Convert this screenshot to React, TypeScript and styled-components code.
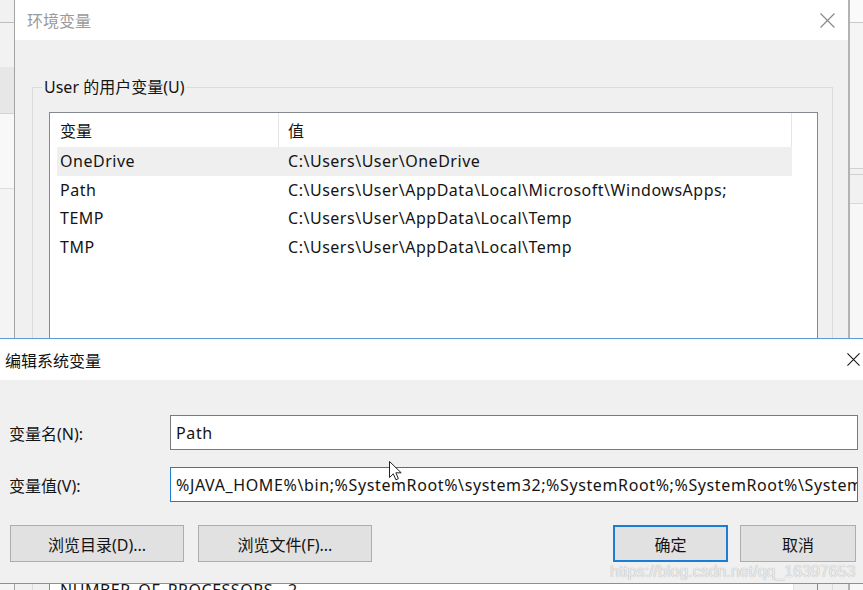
import React from 'react';
import styled, { createGlobalStyle } from 'styled-components';

const UI_FONT = `"Noto Sans", "Noto Sans CJK SC", sans-serif`;

const userVars = [
  { name: 'OneDrive', value: 'C:\\Users\\User\\OneDrive' },
  { name: 'Path', value: 'C:\\Users\\User\\AppData\\Local\\Microsoft\\WindowsApps;' },
  { name: 'TEMP', value: 'C:\\Users\\User\\AppData\\Local\\Temp' },
  { name: 'TMP', value: 'C:\\Users\\User\\AppData\\Local\\Temp' },
];

const systemVars = [
  { name: 'ComSpec', value: 'C:\\Windows\\system32\\cmd.exe' },
  { name: 'DriverData', value: 'C:\\Windows\\System32\\Drivers\\DriverData' },
  { name: 'JAVA_HOME', value: 'C:\\Program Files\\Java\\jdk1.8.0_201' },
  { name: 'NUMBER_OF_PROCESSORS', value: '2' },
  { name: 'OS', value: 'Windows_NT' },
];

const PATH_VALUE =
  '%JAVA_HOME%\\bin;%SystemRoot%\\system32;%SystemRoot%;%SystemRoot%\\System32\\Wbem;%SYSTEMROOT%\\System32\\WindowsPowerShell\\v1.0\\';

function CloseIcon({ color, size }: { color: string; size: number }) {
  return (
    <svg width={size} height={size} viewBox="0 0 14 14">
      <path d="M0.5 0.5 L13.5 13.5 M13.5 0.5 L0.5 13.5" stroke={color} strokeWidth="1.1" fill="none" />
    </svg>
  );
}

function PointerIcon() {
  return (
    <svg width="14" height="21" viewBox="0 0 14 21">
      <path
        d="M0.5 0.5 L0.5 16.5 L4.3 12.8 L6.9 18.8 L9.4 17.7 L6.9 11.8 L12.2 11.8 Z"
        fill="#fff"
        stroke="#222"
        strokeWidth="1"
        strokeLinejoin="round"
      />
    </svg>
  );
}

function VarList({ rows, height, selected, scroll }: {
  rows: { name: string; value: string }[];
  height: number;
  selected?: number;
  scroll?: boolean;
}) {
  return (
    <ListBox $h={height}>
      <ListMain>
        <HeaderRow>
          <HeaderCell $w={229} $pad={10}>变量</HeaderCell>
          <HeaderCell $w={513} $pad={9}>值</HeaderCell>
        </HeaderRow>
        {rows.map((r, i) => (
          <Row key={r.name} $selected={i === selected}>
            <Cell $w={222} $pad={3}>{r.name}</Cell>
            <Cell $pad={9}>{r.value}</Cell>
          </Row>
        ))}
      </ListMain>
      {scroll && <ScrollTrack />}
    </ListBox>
  );
}

export default function App() {
  return (
    <>
      <GlobalStyle />
      <Desktop>
        <SideWindow $side="left">
          <Band $h={23} $bg="#f1f1f1" $line="#bdbdbd" />
          <Band $h={44} $bg="#f2f2f2" />
          <Band $h={47} $bg="#e7e7e7" $line="#d3d3d3" />
          <Band $h={75} $bg="#f8f8f8" $line="#dedede" />
          <Band $h={400} $bg="#f4f4f4" />
        </SideWindow>
        <SideWindow $side="right">
          <Band $h={23} $bg="#fafafa" $line="#c9c9c9" />
          <Band $h={146} $bg="#f5f5f5" $line="#d2d2d2" />
          <Band $h={6} $bg="#f1f1f1" $line="#d2d2d2" />
          <Band $h={29} $bg="#f1f1f1" $line="#d8d8d8" />
          <Band $h={400} $bg="#f7f7f7" />
        </SideWindow>

        <EnvWindow>
          <TitleBar $h={40} $padL={12} $padR={13} $inactive>
            <span>环境变量</span>
            <CloseIcon color="#8a8a8a" size={15} />
          </TitleBar>
          <EnvBody>
            <GroupBox>
              <Legend>User 的用户变量(U)</Legend>
              <VarList rows={userVars} height={230} selected={0} />
              <ButtonBar $end>
                <DlgButton $w={115} $h={33}>新建(N)...</DlgButton>
                <DlgButton $w={115} $h={33}>编辑(E)...</DlgButton>
                <DlgButton $w={115} $h={33}>删除(D)</DlgButton>
              </ButtonBar>
            </GroupBox>
            <GroupBox $gap={21}>
              <Legend>系统变量(S)</Legend>
              <VarList rows={systemVars} height={200} scroll />
            </GroupBox>
          </EnvBody>
        </EnvWindow>

        <EditWindow>
          <TitleBar $h={41} $padL={8} $padR={15}>
            <span>编辑系统变量</span>
            <CloseIcon color="#111" size={13} />
          </TitleBar>
          <EditBody>
            <FormGrid>
              <FieldLabel>变量名(N):</FieldLabel>
              <TextBox>
                <TextValue>Path</TextValue>
              </TextBox>
              <FieldLabel>变量值(V):</FieldLabel>
              <TextBox $focused>
                <TextValue>{PATH_VALUE}</TextValue>
              </TextBox>
            </FormGrid>
            <ButtonBar>
              <ButtonGroup $gap={14}>
                <DlgButton $w={174} $h={37}>浏览目录(D)...</DlgButton>
                <DlgButton $w={174} $h={37}>浏览文件(F)...</DlgButton>
              </ButtonGroup>
              <ButtonGroup $gap={12}>
                <DlgButton $w={115} $h={37} $primary>确定</DlgButton>
                <DlgButton $w={116} $h={37}>取消</DlgButton>
              </ButtonGroup>
            </ButtonBar>
          </EditBody>
        </EditWindow>

        <Pointer>
          <PointerIcon />
        </Pointer>
        <Watermark>https://blog.csdn.net/qq_16397653</Watermark>
      </Desktop>
    </>
  );
}

const GlobalStyle = createGlobalStyle`
  html, body {
    margin: 0;
    padding: 0;
    background: #f0f0f0;
    overflow: hidden;
  }
  * {
    box-sizing: border-box;
  }
`;

const Desktop = styled.div`
  position: relative;
  width: 863px;
  height: 590px;
  overflow: hidden;
  background: #f0f0f0;
  font-family: ${UI_FONT};
  font-size: 16px;
  color: #141414;
`;

const SideWindow = styled.div<{ $side: 'left' | 'right' }>`
  position: absolute;
  top: 0;
  bottom: 0;
  ${p => (p.$side === 'left' ? 'left: 0; width: 15px;' : 'right: 0; width: 14px;')}
  display: flex;
  flex-direction: column;
  background: #f3f3f3;
`;

const Band = styled.div<{ $h: number; $bg: string; $line?: string }>`
  flex: none;
  height: ${p => p.$h}px;
  background: ${p => p.$bg};
  border-bottom: 1px solid ${p => p.$line ?? p.$bg};
`;

const EnvWindow = styled.section`
  position: absolute;
  left: 14px;
  top: 0;
  width: 836px;
  height: 640px;
  display: flex;
  flex-direction: column;
  background: #f0f0f0;
  border-left: 1px solid #a3a3a3;
  border-right: 2px solid #b3b3b3;
`;

const TitleBar = styled.header<{ $h: number; $padL: number; $padR: number; $inactive?: boolean }>`
  flex: none;
  height: ${p => p.$h}px;
  display: flex;
  align-items: center;
  justify-content: space-between;
  padding: 0 ${p => p.$padR}px 0 ${p => p.$padL}px;
  background: #fff;
  color: ${p => (p.$inactive ? '#9a9a9a' : '#111')};
  font-size: 16px;
  svg {
    display: block;
  }
`;

const EnvBody = styled.div`
  flex: 1;
  display: flex;
  flex-direction: column;
  padding: 36px 15px 0 17px;
`;

const GroupBox = styled.fieldset<{ $gap?: number }>`
  margin: ${p => p.$gap ?? 0}px 0 0;
  padding: 14px 14px 12px 16px;
  border: 1px solid #dcdcdc;
  min-width: 0;
`;

const Legend = styled.legend`
  margin-left: -7px;
  padding: 0 2px;
  line-height: 22px;
  font-size: 16px;
  color: #141414;
`;

const ListBox = styled.div<{ $h: number }>`
  height: ${p => p.$h}px;
  display: flex;
  border: 1px solid #84888f;
  background: #fff;
  overflow: hidden;
`;

const ListMain = styled.div`
  flex: 1;
  min-width: 0;
  display: flex;
  flex-direction: column;
`;

const HeaderRow = styled.div`
  flex: none;
  display: flex;
  height: 34px;
`;

const HeaderCell = styled.div<{ $w: number; $pad: number }>`
  flex: none;
  width: ${p => p.$w}px;
  padding-left: ${p => p.$pad}px;
  display: flex;
  align-items: center;
  border-right: 1px solid #e5e5e5;
`;

const Row = styled.div<{ $selected?: boolean }>`
  flex: none;
  display: flex;
  align-items: center;
  height: 28.5px;
  width: 735px;
  margin-left: 7px;
  background: ${p => (p.$selected ? '#efefef' : 'transparent')};
  white-space: nowrap;
  letter-spacing: 0.52px;
`;

const Cell = styled.div<{ $w?: number; $pad: number }>`
  flex: ${p => (p.$w ? 'none' : '1')};
  width: ${p => (p.$w ? `${p.$w}px` : 'auto')};
  padding-left: ${p => p.$pad}px;
  overflow: hidden;
`;

const ScrollTrack = styled.div`
  flex: none;
  width: 24px;
  background: #f0f0f0;
  border-left: 1px solid #e2e2e2;
`;

const ButtonBar = styled.div<{ $end?: boolean }>`
  display: flex;
  justify-content: ${p => (p.$end ? 'flex-end' : 'space-between')};
  gap: 10px;
  margin-top: ${p => (p.$end ? 10 : 23)}px;
  padding: ${p => (p.$end ? '0' : '0 2px 0 1px')};
`;

const ButtonGroup = styled.div<{ $gap: number }>`
  display: flex;
  gap: ${p => p.$gap}px;
`;

const DlgButton = styled.button<{ $w: number; $h: number; $primary?: boolean }>`
  width: ${p => p.$w}px;
  height: ${p => p.$h}px;
  margin: 0;
  padding: 0;
  background: #e1e1e1;
  border: ${p => (p.$primary ? '2px solid #1a7fd4' : '1px solid #adadad')};
  border-radius: 0;
  font-family: ${UI_FONT};
  font-size: 16px;
  color: #141414;
`;

const EditWindow = styled.section`
  position: absolute;
  left: -4px;
  top: 338px;
  width: 880px;
  height: 246px;
  display: flex;
  flex-direction: column;
  background: #f0f0f0;
  border: 1px solid #5a9bd8;
`;

const EditBody = styled.div`
  flex: 1;
  display: flex;
  flex-direction: column;
  padding: 35px 17px 0 12px;
`;

const FormGrid = styled.div`
  display: grid;
  grid-template-columns: 161px 1fr;
  row-gap: 17px;
  align-items: center;
`;

const FieldLabel = styled.label`
  font-size: 16px;
`;

const TextBox = styled.div<{ $focused?: boolean }>`
  height: 35px;
  display: flex;
  align-items: center;
  padding: 0 5px;
  background: #fff;
  border: 1px solid ${p => (p.$focused ? '#1a7fd4' : '#7a7a7a')};
  overflow: hidden;
`;

const TextValue = styled.span`
  white-space: nowrap;
  letter-spacing: 0.62px;
`;

const Pointer = styled.div`
  position: absolute;
  left: 389px;
  top: 461px;
  svg {
    display: block;
  }
`;

const Watermark = styled.div`
  position: absolute;
  left: 610px;
  top: 561px;
  font-family: "Liberation Sans", Arial, sans-serif;
  font-size: 16px;
  line-height: 22px;
  color: #ececec;
  text-shadow: 0 0 1px rgba(0, 0, 0, 0.35);
  white-space: nowrap;
`;
